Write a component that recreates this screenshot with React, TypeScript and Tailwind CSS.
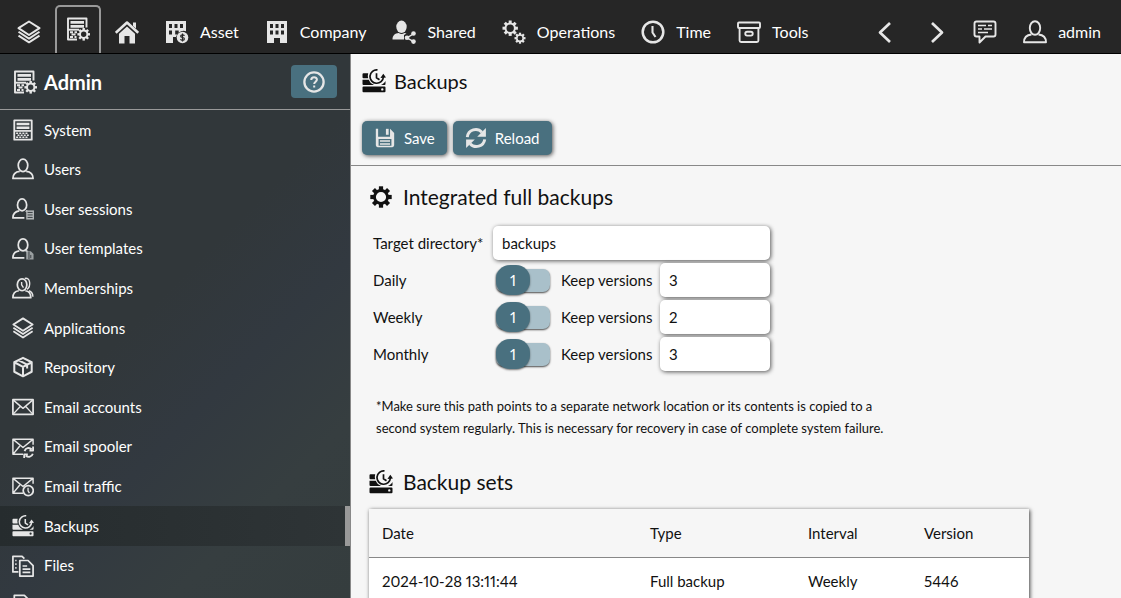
import { useState } from "react";
import type { ReactNode } from "react";

type IconProps = { className?: string };

function Svg({ className = "size-6", children }: { className?: string; children: ReactNode }) {
  return (
    <svg
      viewBox="0 0 24 24"
      fill="none"
      stroke="currentColor"
      strokeWidth="1.9"
      strokeLinejoin="round"
      aria-hidden="true"
      className={`shrink-0 ${className}`}
    >
      {children}
    </svg>
  );
}

function Gear({ x, y, r, width, tooth }: { x: number; y: number; r: number; width: number; tooth: number }) {
  return (
    <g transform={`translate(${x} ${y})`}>
      <circle r={r} strokeWidth={width} />
      {[0, 45, 90, 135, 180, 225, 270, 315].map((a) => (
        <path key={a} d={`M0 ${-r}V${-r - width / 2 - tooth}`} strokeWidth={tooth * 1.5} transform={`rotate(${a})`} />
      ))}
    </g>
  );
}

const Layers = (p: IconProps) => (
  <Svg {...p}>
    <path d="M12 1.5 22.5 8.2 12 15 1.5 8.2Z" strokeWidth="2" />
    <path d="M1.5 11.8 12 18.6l10.500-6.800M1.500 15.600 12 22.400l10.500-6.800" />
  </Svg>
);

const ServerGear = (p: IconProps) => (
  <Svg {...p}>
    <path d="M20.500 10.500V1.500h-18.500v21h9" />
    <path d="M4.500 5.300h13.500M4.500 9.400h13.500" strokeWidth="2.800" />
    <path d="M2 12.700h11" />
    <path d="M4 15.300h3M8.500 15.300h2.500M5.500 17.500h4M4 20h3M8.500 20h2" strokeWidth="1.900" />
    <Gear x={17.7} y={17.3} r={3.7} width={2} tooth={1.6} />
  </Svg>
);

const Server = (p: IconProps) => (
  <Svg {...p}>
    <rect x="2.500" y="1.500" width="19" height="21" strokeWidth="2" />
    <path d="M5 5.400h14M5 9.600h14" strokeWidth="2.600" />
    <path d="M2.500 13h19" />
    <path d="M4.500 15.600h2.200m1.200 0h2.200m1.200 0h2.200m1.200 0h2.200M6 17.800h2.200m1.200 0h2.200m1.200 0h2.200m1.200 0h2.200M4.500 20h2.200m1.200 0h2.200m1.200 0h2.200m1.200 0h2.200" strokeWidth="1.700" />
  </Svg>
);

const Home = (p: IconProps) => (
  <Svg {...p}>
    <path d="M.8 12.800 12 2.500l11.200 10.300" strokeWidth="2.600" />
    <path d="M18 2.500h3v6l-3-2.600Z" fill="currentColor" stroke="none" />
    <path d="M12 6.500 4 13.800V23.500h5.500V16h5v7.500H20v-9.700Z" fill="currentColor" stroke="none" />
  </Svg>
);

const Building = (p: IconProps) => (
  <Svg {...p}>
    <path
      d="M2 1h20v22h-7v-5H9v5H2ZM5 4v4h3V4Zm5.500 0v4h3V4ZM16 4v4h3V4ZM5 10.500v4h3v-4Zm5.500 0v4h3v-4Zm5.500 0v4h3v-4Z"
      fill="currentColor"
      stroke="none"
      fillRule="evenodd"
    />
  </Svg>
);

const BuildingMoney = (p: IconProps) => (
  <Svg {...p}>
    <path
      d="M1 1h20v10.200a7 7 0 0 0-8.500 3.300h-2.300V10.500h3.500V13A7 7 0 0 0 11 17H8v6H1ZM4 4v4h3V4Zm5.500 0v4h3V4ZM15 4v4h3V4ZM4 10.500v4h3v-4Z"
      fill="currentColor"
      stroke="none"
      fillRule="evenodd"
    />
    <circle cx="17.500" cy="17.500" r="5.800" fill="currentColor" stroke="none" />
    <path
      d="M19.500 15.700c-.5-.8-1.300-.9-2-.9-2.400 0-2.600 2.500 0 2.700 2.600.200 2.400 2.800 0 2.800-.9 0-1.700-.3-2.100-1M17.500 13.500v8"
      stroke="#262626"
      strokeWidth="1.200"
    />
  </Svg>
);

const Shared = (p: IconProps) => (
  <Svg {...p}>
    <ellipse cx="9.500" cy="6.800" rx="5.200" ry="6.200" fill="currentColor" stroke="none" />
    <path d="M.5 19.500c0-4 2.500-6.300 6.300-6.500 1.500 1.400 4 1.400 5.500 0 1 0 1.500.2 2.200.5l-2.500 1.500v4.500Z" fill="currentColor" stroke="none" />
    <path d="M22 13.500 15 17.800l7 4" strokeWidth="1.400" />
    <g fill="currentColor" stroke="none">
      <circle cx="21.500" cy="13.500" r="2.300" />
      <circle cx="15" cy="17.800" r="2.300" />
      <circle cx="21.500" cy="21.600" r="2.300" />
    </g>
  </Svg>
);

const Gears = (p: IconProps) => (
  <Svg {...p}>
    <Gear x={8.2} y={8.2} r={4.7} width={2} tooth={2} />
    <Gear x={18} y={18.2} r={3.2} width={1.6} tooth={1.5} />
  </Svg>
);

const Clock = (p: IconProps) => (
  <Svg {...p}>
    <circle cx="12" cy="12" r="10.300" strokeWidth="2.500" />
    <path d="M11.500 6v6.500l3 4.500" strokeWidth="2.100" />
  </Svg>
);

const Archive = (p: IconProps) => (
  <Svg {...p}>
    <rect x="1" y="2.500" width="22" height="5.500" rx="1" />
    <path d="M2.600 8v12.500q0 1.500 1.500 1.500h15.800q1.500 0 1.500-1.500V8" />
    <rect x="8.300" y="11.800" width="7.400" height="3.800" rx="1.800" />
  </Svg>
);

const ChevronLeft = (p: IconProps) => (
  <Svg {...p}>
    <path d="m17 3-10 9.500L17 22" strokeWidth="2.700" />
  </Svg>
);

const ChevronRight = (p: IconProps) => (
  <Svg {...p}>
    <path d="m7 3 10 9.500L7 22" strokeWidth="2.700" />
  </Svg>
);

const Comment = (p: IconProps) => (
  <Svg {...p}>
    <path d="M3.500 1.500h17q2 0 2 2v11q0 2-2 2h-8L6.500 22.500v-6h-3q-2 0-2-2v-11q0-2 2-2Z" />
    <path d="M5 5.500h8M15 5.500h4M5 9h4M11 9h8M5 12.500h10" strokeWidth="1.700" />
  </Svg>
);

const USER_SHORT = "M8 14C3.500 14.500 1 17 1 21.800h12.500M15 14l2.500 1";

const User = (p: IconProps) => (
  <Svg {...p}>
    <ellipse cx="12" cy="8" rx="5.200" ry="6.800" />
    <path d="M8.500 14.500C3.500 15 1 17.500 1 22.300h22C23 17.500 20.500 15 15.500 14.500" />
  </Svg>
);

const UserSession = (p: IconProps) => (
  <Svg {...p}>
    <ellipse cx="11" cy="7.500" rx="5" ry="6.500" />
    <path d={USER_SHORT} />
    <rect x="15.500" y="13.500" width="8.500" height="10" fill="#aeb2b3" stroke="none" />
    <path d="M17 15.800h5.500M17 18.500h5.500M17 21.200h5.500" stroke="#31373a" strokeWidth="1" />
  </Svg>
);

const UserTemplate = (p: IconProps) => (
  <Svg {...p}>
    <ellipse cx="12" cy="7.500" rx="5.200" ry="6.500" />
    <path d={USER_SHORT} />
    <path d="M15.500 14.500h5l3 3v6h-8Z" fill="#9ba0a2" stroke="none" />
    <path d="M18.500 15v8M20.500 18.500v3.500" stroke="#31373a" strokeWidth="1" />
  </Svg>
);

const Members = (p: IconProps) => (
  <Svg {...p}>
    <ellipse cx="11" cy="8.500" rx="5.200" ry="6.500" />
    <path d="M10.500 5.500v3l2 3" strokeWidth="1.500" />
    <path d="M14 1.500c6-1.500 7 8.500 2.500 12M18.500 15c2.800 1 4.300 3 4.300 6.500" strokeWidth="1.500" />
    <path d="M7.500 15C3.500 15.500 1 17.500 1 22.500h19.500C20.500 17.500 18.500 15.500 14.500 15" />
  </Svg>
);

const Package = (p: IconProps) => (
  <Svg {...p}>
    <path d="M12 2 21.500 6.800v10.400L12 22.200l-9.500-5V6.800ZM2.500 6.800 12 11.800l9.500-5M12 11.800v10.400M7 4.500l9.500 5v4" strokeWidth="2.200" />
  </Svg>
);

const Mail = (p: IconProps) => (
  <Svg {...p}>
    <rect x="1" y="4" width="22" height="16" />
    <path d="m1.500 4.500 10.500 9 10.500-9M1.500 19.500l7.500-8M22.500 19.500l-7.500-8" strokeWidth="1.500" />
  </Svg>
);

const MAIL_CUT = "M23 9.500V3.500H1v16.500h11M1.500 4l10.500 8.500L22.500 4M1.500 19.500 8.500 11";

const MailSync = (p: IconProps) => (
  <Svg {...p}>
    <path d={MAIL_CUT} strokeWidth="1.600" />
    <path d="M13.700 16.500c1-3.500 5-4.500 7.700-2M23 11.500v4.300h-4M22.700 19.300c-1 3.500-5 4.500-7.700 2M13.300 24v-4h4" strokeWidth="2" />
  </Svg>
);

const MailClock = (p: IconProps) => (
  <Svg {...p}>
    <path d={MAIL_CUT} strokeWidth="1.600" />
    <circle cx="17.700" cy="17" r="5.500" />
    <path d="M17.500 13.800v3.500l1.500 2.500" strokeWidth="1.400" />
  </Svg>
);

const Backup = (p: IconProps) => (
  <Svg {...p}>
    <g fill="currentColor" stroke="none">
      <path d="M1.500 4.200h4.700a9 9 0 0 0 0 5H1.500q-1 0-1-1v-3q0-1 1-1ZM.5 10.700h6.300c.9 2.200 2.400 3.900 4.700 4.900v.4h-10q-1 0-1-1ZM23.500 12v3q0 1-1 1h-3.500c2-.9 3.500-2.200 4.500-4Z" />
      <path
        d="M1.500 17.600h21q1 0 1 1v3.600q0 1-1 1h-21q-1 0-1-1v-3.600q0-1 1-1Zm18.800 1.600a1.200 1.200 0 1 0 0 2.400 1.200 1.200 0 0 0 0-2.400Z"
        fillRule="evenodd"
      />
      <path d="m21.300 4.800 2.700 3.700-5.600.4Z" />
    </g>
    <path d="M15.500.9A6.700 6.700 0 1 0 21.400 8M14.500 4.300v4.500l3 2" strokeWidth="1.700" />
  </Svg>
);

const Files = (p: IconProps) => (
  <Svg {...p}>
    <path d="M7 18.500H1v-17h10l2.500 2.500M3.500 6h1.500M3.500 10h1.500M3.500 14h1.500" />
    <path d="M8.500 6h9l5.500 5.500V23H8.500ZM11.500 12h5M11.500 15.500h8.500M11.500 19h8.500" />
  </Svg>
);

const Page = (p: IconProps) => (
  <Svg {...p}>
    <path d="M2.500 1.500h11l5 5v16h-16Z" />
    <path d="M5.500 10h10M5.500 14h10" />
  </Svg>
);

const Help = (p: IconProps) => (
  <Svg {...p}>
    <circle cx="12" cy="12" r="10.500" strokeWidth="2.500" />
    <path d="M9 9.700c0-4 6.300-3.700 6.200-.3 0 2.300-2.900 2.300-3 4.800M12.200 15.800V18" strokeWidth="2.200" />
  </Svg>
);

const SaveIcon = (p: IconProps) => (
  <Svg {...p}>
    <path
      d="M2 2h2.500v8.500h13V2L22 6.500V20q0 2-2 2H4q-2 0-2-2ZM5 13v7.500h14V13Z"
      fill="currentColor"
      stroke="none"
      fillRule="evenodd"
    />
    <path d="M6.500 15.300h11M6.500 18.500h11" strokeWidth="1.500" />
    <path d="M13 2h3v6.500h-3Z" fill="currentColor" stroke="none" />
  </Svg>
);

const ReloadIcon = (p: IconProps) => (
  <Svg {...p}>
    <path d="M2.500 11C3.500 2.500 13.500.2 18.500 5.800M21.500 13.500C20.500 21.500 10.500 23.800 5.500 18.200" strokeWidth="3.200" strokeLinejoin="miter" />
    <path d="M22.800 1v9.500h-9.500ZM1.200 23v-9.500h9.500Z" fill="currentColor" stroke="none" />
  </Svg>
);

const Cog = (p: IconProps) => (
  <Svg {...p}>
    <Gear x={12} y={12} r={6.5} width={2.8} tooth={2.8} />
  </Svg>
);

const modules = [
  { label: "Asset", icon: BuildingMoney },
  { label: "Company", icon: Building },
  { label: "Shared", icon: Shared },
  { label: "Operations", icon: Gears },
  { label: "Time", icon: Clock },
  { label: "Tools", icon: Archive },
];

const sections = [
  { label: "System", icon: Server },
  { label: "Users", icon: User },
  { label: "User sessions", icon: UserSession },
  { label: "User templates", icon: UserTemplate },
  { label: "Memberships", icon: Members },
  { label: "Applications", icon: Layers },
  { label: "Repository", icon: Package },
  { label: "Email accounts", icon: Mail },
  { label: "Email spooler", icon: MailSync },
  { label: "Email traffic", icon: MailClock },
  { label: "Backups", icon: Backup },
  { label: "Files", icon: Files },
  { label: "", icon: Page },
];

const intervals = [
  { label: "Daily", versions: "3" },
  { label: "Weekly", versions: "2" },
  { label: "Monthly", versions: "3" },
];

const inputClass =
  "h-[34px] w-full rounded-[5px] bg-white px-[9px] shadow-[1px_1px_4px_rgba(0,0,0,0.65)] outline-none";

function TopBar() {
  return (
    <header className="flex h-[54px] shrink-0 items-stretch justify-between border-b border-black bg-[#262626] text-[16px] text-white">
      <nav className="flex items-stretch pl-[17px]" aria-label="Modules">
        <a href="#apps" aria-label="Applications" className="flex items-center pt-[10px] text-[#e6e6e6]">
          <Layers />
        </a>
        <a
          href="#admin"
          aria-label="Admin"
          className="mt-[5px] ml-[14px] flex w-[46px] justify-center rounded-t-[5px] border-2 border-b-0 border-[#999] pt-[10px] text-[#e6e6e6]"
        >
          <ServerGear />
        </a>
        <a href="#home" aria-label="Home" className="ml-[14px] flex items-center pt-[10px] text-[#e6e6e6]">
          <Home />
        </a>
        {modules.map(({ label, icon: Icon }) => (
          <a key={label} href={`#${label.toLowerCase()}`} className="ml-[26px] flex items-center gap-[11px] pt-[10px]">
            <Icon className="size-6 text-[#e6e6e6]" />
            {label}
          </a>
        ))}
      </nav>
      <div className="flex items-center pt-[10px] pr-5">
        <button type="button" aria-label="Back" className="text-[#e6e6e6]">
          <ChevronLeft />
        </button>
        <button type="button" aria-label="Forward" className="ml-7 text-[#e6e6e6]">
          <ChevronRight />
        </button>
        <button type="button" aria-label="Messages" className="ml-6 text-[#e6e6e6]">
          <Comment />
        </button>
        <button type="button" className="ml-[26px] flex items-center gap-[11px]">
          <User className="size-6 text-[#e6e6e6]" />
          admin
        </button>
      </div>
    </header>
  );
}

function Sidebar() {
  return (
    <aside className="w-[351px] shrink-0 overflow-hidden border-r border-[#888] bg-[linear-gradient(135deg,#31373a_0%,#31373a_45%,#323940_62%,#363e40_80%,#353d3e_100%)] text-white">
      <div className="flex h-14 items-center gap-[7px] border-b border-[#999] px-[13px]">
        <ServerGear className="size-6 text-[#e6e6e6]" />
        <h1 className="flex-1 text-[20px] font-bold">Admin</h1>
        <button
          type="button"
          aria-label="Help"
          className="flex h-[33px] w-[46px] items-center justify-center rounded-[4px] bg-[#49707f] text-[#e6e6e6]"
        >
          <Help className="size-[22px]" />
        </button>
      </div>
      <ul className="grid h-[515px] auto-rows-fr">
        {sections.map(({ label, icon: Icon }) => {
          const active = label === "Backups";
          return (
            <li key={label} className="flex">
              <a
                href={`#${label.toLowerCase().replace(" ", "-")}`}
                aria-current={active ? "page" : undefined}
                className={
                  active
                    ? "flex flex-1 items-center gap-[10px] border-r-[5px] border-[#999] bg-linear-to-r from-[#262c2e] to-[#2e3436] pl-3"
                    : "flex flex-1 items-center gap-[10px] pl-3"
                }
              >
                <Icon className="size-[22px] text-[#e6e6e6]" />
                {label}
              </a>
            </li>
          );
        })}
      </ul>
    </aside>
  );
}

function Toggle({ id, label }: { id: string; label: string }) {
  const [on, setOn] = useState(true);
  return (
    <label htmlFor={id} className="relative ml-[3px] flex h-[30px] w-[54px] cursor-pointer items-center">
      <input
        id={id}
        type="checkbox"
        aria-label={label}
        checked={on}
        onChange={(e) => setOn(e.target.checked)}
        className="absolute inset-0 opacity-0"
      />
      <span className="h-[23px] w-full rounded-[7px] bg-[#a9c0ca] shadow-[0_1px_2px_rgba(0,0,0,0.7)]" />
      <span
        className={
          on
            ? "absolute left-0 flex h-[30px] w-[34px] items-center justify-center rounded-[14px] bg-[#49707f] text-white shadow-[0_1px_2px_rgba(0,0,0,0.5)]"
            : "absolute right-0 flex h-[30px] w-[34px] items-center justify-center rounded-[14px] bg-[#888] text-white shadow-[0_1px_2px_rgba(0,0,0,0.5)]"
        }
      >
        {on ? "1" : "0"}
      </span>
    </label>
  );
}

export default function App() {
  return (
    <div className="flex h-screen flex-col overflow-hidden bg-[#f6f6f6] font-['Lato','Open_Sans',sans-serif] text-[15px] text-[#111] proportional-nums">
      <TopBar />
      <div className="flex min-h-0 flex-1">
        <Sidebar />
        <main className="min-w-0 flex-1 overflow-hidden">
          <div className="flex h-28 flex-col border-b border-[#888] pl-[11px]">
            <h2 className="flex h-[54px] items-center gap-2 text-[20px]">
              <Backup />
              Backups
            </h2>
            <div className="mt-[13px] flex gap-[6px] text-white">
              <button
                type="button"
                className="flex h-[34px] items-center gap-2 rounded-[5px] bg-[#49707f] px-3 shadow-[1px_1px_4px_rgba(0,0,0,0.65)]"
              >
                <SaveIcon className="size-[22px] text-[#e6e6e6]" />
                Save
              </button>
              <button
                type="button"
                className="flex h-[34px] items-center gap-2 rounded-[5px] bg-[#49707f] px-3 shadow-[1px_1px_4px_rgba(0,0,0,0.65)]"
              >
                <ReloadIcon className="size-[22px] text-[#e6e6e6]" />
                Reload
              </button>
            </div>
          </div>

          <section className="pl-[18px]">
            <h3 className="flex h-[62px] items-center gap-[10px] text-[21px]">
              <Cog />
              Integrated full backups
            </h3>
            <form className="-mt-0.5 grid w-[402px] grid-cols-[120px_68px_99px_115px] items-center gap-y-[3px] pl-1">
              <label htmlFor="target">Target directory*</label>
              <div className="col-span-3 pr-[5px]">
                <input id="target" type="text" defaultValue="backups" className={inputClass} />
              </div>
              {intervals.map(({ label, versions }) => {
                const id = label.toLowerCase();
                return (
                  <div key={label} className="col-span-4 grid grid-cols-subgrid items-center">
                    <span>{label}</span>
                    <Toggle id={id} label={label} />
                    <label htmlFor={`${id}-versions`}>Keep versions</label>
                    <div className="pr-[5px]">
                      <input
                        id={`${id}-versions`}
                        type="text"
                        inputMode="numeric"
                        defaultValue={versions}
                        className={inputClass}
                      />
                    </div>
                  </div>
                );
              })}
            </form>
            <p className="mt-6 max-w-[550px] pl-[7px] text-[13px] leading-[22px]">
              *Make sure this path points to a separate network location or its contents is copied to a
              <br />
              second system regularly. This is necessary for recovery in case of complete system failure.
            </p>
          </section>

          <section className="pl-[18px]">
            <h3 className="mt-3 flex h-[62px] items-center gap-[10px] text-[21px]">
              <Backup />
              Backup sets
            </h3>
            <table className="-mt-1 w-[660px] table-fixed bg-white text-left shadow-[1px_1px_4px_rgba(0,0,0,0.75)]">
              <thead>
                <tr className="h-12 border-b border-[#888] bg-[#f6f6f6]">
                  <th className="w-[268px] pl-[13px] font-normal">Date</th>
                  <th className="w-[158px] pl-[13px] font-normal">Type</th>
                  <th className="w-[116px] pl-[13px] font-normal">Interval</th>
                  <th className="pl-[13px] font-normal">Version</th>
                </tr>
              </thead>
              <tbody>
                <tr className="h-12">
                  <td className="pl-[13px]">2024-10-28 13:11:44</td>
                  <td className="pl-[13px]">Full backup</td>
                  <td className="pl-[13px]">Weekly</td>
                  <td className="pl-[13px]">5446</td>
                </tr>
              </tbody>
            </table>
          </section>
        </main>
      </div>
    </div>
  );
}
